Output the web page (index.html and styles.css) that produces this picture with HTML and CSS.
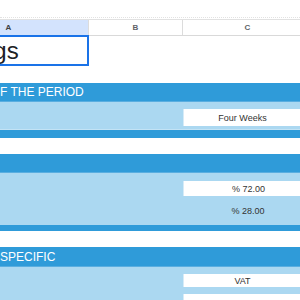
FILE: index.html
```html
<!DOCTYPE html>
<html>
<head>
<meta charset="utf-8">
<link rel="stylesheet" href="styles.css">
</head>
<body>
<div class="top"></div>
<div class="sheet">
  <div class="row colhead">
    <div class="c a sel-col">A</div>
    <div class="c b">B</div>
    <div class="c cc">C</div>
  </div>
  <div class="row r1">
    <div class="c a selected">Settings</div>
    <div class="c b"></div>
    <div class="c cc"></div>
  </div>
  <div class="row r2"></div>
  <div class="row band sec r3"><span class="title">F THE PERIOD</span></div>
  <div class="row light r4">
    <div class="c a"></div>
    <div class="c b"></div>
    <div class="c cc"><div class="box shift">Four Weeks</div></div>
  </div>
  <div class="row band r5"></div>
  <div class="row r6"></div>
  <div class="row band sec r7"><span class="title"></span></div>
  <div class="row light r8">
    <div class="c a"></div>
    <div class="c b"></div>
    <div class="c cc stack">
      <div class="box b72">% 72.00</div>
      <div class="plain">% 28.00</div>
    </div>
  </div>
  <div class="row band r9"></div>
  <div class="row r10"></div>
  <div class="row band sec r11"><span class="title">SPECIFIC</span></div>
  <div class="row light r12">
    <div class="c a"></div>
    <div class="c b"></div>
    <div class="c cc stack">
      <div class="box shift vat">VAT</div>
      <div class="box next"></div>
    </div>
  </div>
</div>
</body>
</html>
```

FILE: styles.css
```css
html, body {
  margin: 0;
  padding: 0;
  background: #ffffff;
  overflow: hidden;
  font-family: "Liberation Sans", Arial, sans-serif;
}
.top {
  height: 17px;
  border-bottom: 1px dotted #e2e2e2;
  margin-bottom: 1px;
}
.sheet {
  margin-left: -71px;
  width: 400px;
}
.row {
  display: flex;
}
.c {
  flex: none;
  box-sizing: border-box;
}
.a { width: 160px; }
.b { width: 94px; }
.cc { width: 146px; }

.colhead {
  height: 17px;
  border-top: 1px solid #e1e1e1;
  border-bottom: 1px solid #d9d9d9;
  box-sizing: border-box;
  font-size: 8px;
  font-weight: bold;
  color: #5f6368;
}
.colhead .c {
  display: flex;
  align-items: center;
  justify-content: center;
  border-right: 1px solid #dcdcdc;
}
.colhead .cc { width: 130px; }
.sel-col {
  background: #d3e3fd;
  color: #3c4043;
}

.r1 { height: 30px; }
.selected {
  height: 31px;
  margin-top: -1px;
  border: 2px solid #1a73e8;
  font-size: 24px;
  color: #202124;
  padding-left: 1px;
  line-height: 28px;
}
.r2 { height: 17px; }

.band { background: #2f9bd9; }
.light { background: #abd8f1; }
.sec {
  align-items: center;
  padding-left: 71px;
  color: #ffffff;
  font-size: 12px;
  box-sizing: border-box;
}
.r3 { height: 19px; border-bottom: 1px solid #5aaee0; box-sizing: border-box; }
.r4 { height: 28px; border-bottom: 1px solid #c3e3f5; box-sizing: border-box; }
.r5 { height: 8px; }
.r6 { height: 16px; }
.r7 { height: 19px; border-bottom: 1px solid #5aaee0; box-sizing: border-box; }
.r8 { height: 52px; }
.r9 { height: 6px; }
.r10 { height: 16px; }
.r11 { height: 20px; border-bottom: 1px solid #5aaee0; box-sizing: border-box; }
.r12 { height: 40px; }

.box {
  background: #ffffff;
  color: #333333;
  font-size: 9px;
  height: 17px;
  margin-top: 7px;
  display: flex;
  align-items: center;
  justify-content: center;
  width: 130px;
  box-sizing: border-box;
  border-left: 1px solid #d6ebf7;
}
.shift { padding-right: 12px; }
.stack {
  display: flex;
  flex-direction: column;
}
.b72 {
  height: 15px;
  margin-top: 8px;
}
.plain {
  font-size: 9px;
  color: #333333;
  width: 130px;
  text-align: center;
  margin-top: 9px;
  line-height: 12px;
}
.vat {
  height: 15px;
  margin-top: 7px;
}
.next {
  height: 15px;
  margin-top: 7px;
}
```
